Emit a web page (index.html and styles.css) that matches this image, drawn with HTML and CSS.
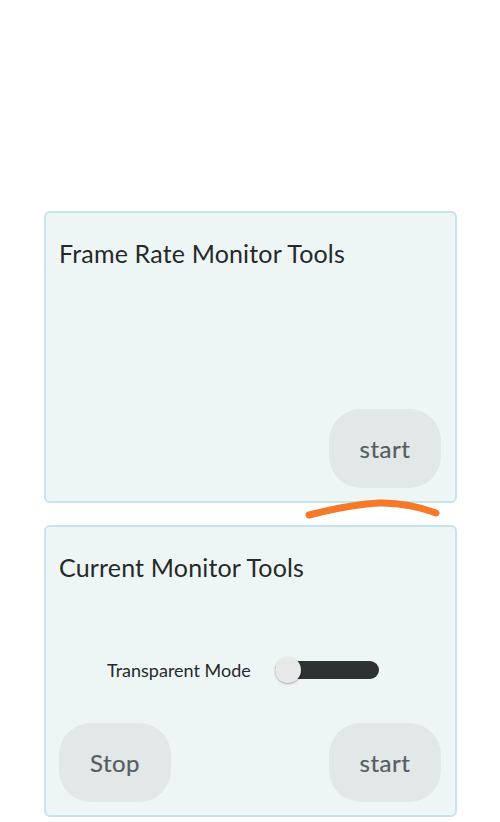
FILE: index.html
```html
<!DOCTYPE html>
<html lang="en">
<head>
    <meta charset="UTF-8">
    <meta name="viewport" content="width=device-width, initial-scale=1.0">
    <title>Monitor Tools</title>
    <link rel="stylesheet" href="styles.css">
</head>
<body>
    <div id="wrapper">
        <div class="panel">
            <p class="panel-title">Frame Rate Monitor Tools</p>
            <div class="actions end">
                <button class="btn">start</button>
            </div>
        </div>
        <div class="panel">
            <p class="panel-title">Current Monitor Tools</p>
            <div class="mode">
                <span class="mode-label">Transparent Mode</span>
                <div class="switch"><div class="thumb"></div></div>
            </div>
            <div class="actions">
                <button class="btn">Stop</button>
                <button class="btn">start</button>
            </div>
        </div>
        <svg class="scribble" width="140" height="26" viewBox="0 0 140 26">
            <path d="M6 18C30 12 52 7 76 6C96 5.500 114 9 133 16" fill="none" stroke="#f47a2a" stroke-width="7" stroke-linecap="round"/>
        </svg>
    </div>
</body>
</html>
```

FILE: styles.css
```css
*{
    margin: 0;
    padding: 0;
    box-sizing: border-box;
}
body{
    background-color: white;
    font-family: Lato, "Open Sans", sans-serif;
}
#wrapper{
    position: relative;
    height: 822px;
    padding: 211px 43px 0 44px;
    display: flex;
    flex-direction: column;
    gap: 22px;
}
.panel{
    height: 292px;
    padding: 13px 14px 13px 13px;
    display: flex;
    flex-direction: column;
    background-color: #eef6f5;
    border: 2px solid #c4e5ec;
    border-radius: 6px;
}
.panel-title{
    margin-top: 12px;
    font-size: 25px;
    line-height: 30px;
    letter-spacing: 0.17px;
    color: #25292b;
}
.mode{
    margin-top: auto;
    margin-bottom: 42px;
    padding-left: 48px;
    display: flex;
    align-items: center;
    gap: 24px;
}
.mode-label{
    width: 144px;
    font-size: 18px;
    color: #25292b;
}
.switch{
    position: relative;
    width: 104px;
    height: 18px;
    background-color: #2f3232;
    border-radius: 9px;
}
.thumb{
    position: absolute;
    left: 0;
    top: -4px;
    width: 26px;
    height: 26px;
    background-color: #e8eaea;
    border-radius: 50%;
    box-shadow: 0 1px 2px rgba(0, 0, 0, 0.3);
}
.actions{
    display: flex;
    justify-content: space-between;
}
.actions.end{
    margin-top: auto;
    justify-content: flex-end;
}
.btn{
    width: 112px;
    height: 79px;
    font-family: inherit;
    font-size: 24px;
    letter-spacing: 0.5px;
    color: #565c5e;
    -webkit-text-stroke: 0.2px #565c5e;
    background-color: #e1e8e7;
    border: none;
    border-radius: 32px;
}
.scribble{
    position: absolute;
    left: 303px;
    top: 497px;
}
```
